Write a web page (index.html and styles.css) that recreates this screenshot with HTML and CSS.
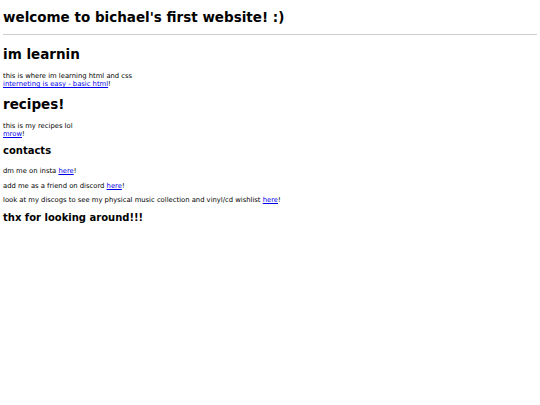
FILE: index.html
```html
<!DOCTYPE html>
<html>
<head>
<meta charset="utf-8">
<title>bichael's first website</title>
<link rel="stylesheet" href="styles.css">
</head>
<body>
<h1 class="title">welcome to bichael's first website! :)</h1>
<hr class="rule">
<h2 class="section">im learnin</h2>
<p class="text">this is where im learning html and css<br><a href="#">interneting is easy - basic html</a>!</p>
<h2 class="section">recipes!</h2>
<p class="text">this is my recipes lol<br><a href="#">mrow</a>!</p>
<h3 class="sub">contacts</h3>
<p class="text">dm me on insta <a href="#">here</a>!</p>
<p class="text">add me as a friend on discord <a href="#">here</a>!</p>
<p class="text">look at my discogs to see my physical music collection and vinyl/cd wishlist <a href="#">here</a>!</p>
<h3 class="sub">thx for looking around!!!</h3>
</body>
</html>
```

FILE: styles.css
```css
html, body {
  background: #fff;
}
body {
  margin: 0;
  padding: 9.3px 3px 3px 3px;
  font-family: "DejaVu Sans", Verdana, sans-serif;
  font-size: 6.8px;
  line-height: 8px;
  color: #000;
}
.title {
  font-size: 13.5px;
  line-height: 16px;
  font-weight: bold;
  margin: 0 0 8.7px 0;
}
.rule {
  border: none;
  border-top: 1px solid #cccccc;
  margin: 0 0 11.5px 0;
  height: 0;
}
.section {
  font-size: 13.5px;
  line-height: 16px;
  font-weight: bold;
  margin: 8.5px 0 9.5px 0;
}
.sub {
  font-size: 10px;
  line-height: 12px;
  font-weight: bold;
  margin: 7.3px 0 9.5px 0;
}
.text {
  margin: 0 0 6.8px 0;
}
a {
  color: #0000ee;
  text-decoration: underline;
}
```
